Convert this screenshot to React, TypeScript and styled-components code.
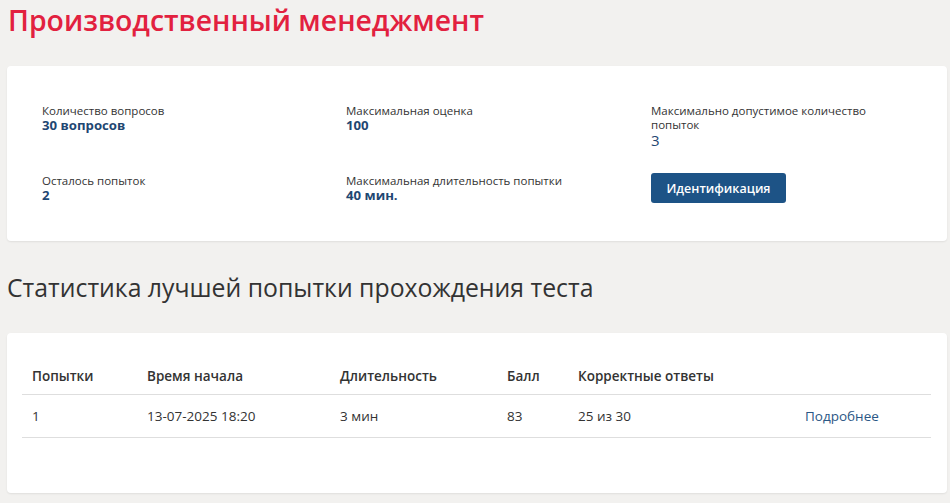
import React from "react";
import styled, { createGlobalStyle } from "styled-components";

const Global = createGlobalStyle`
  html, body { margin: 0; padding: 0; background: #f2f1ef; }
  body { font-family: "Open Sans", "Liberation Sans", sans-serif; color: #333; }
`;

const Page = styled.div`
  padding: 0 3px 12px 7px;
`;

const Title = styled.h1`
  margin: 0 0 28px 0;
  padding: 2px 0 0 1px;
  font-size: 28.4px;
  line-height: 36px;
  font-weight: 600;
  color: #e2213f;
`;

const Card = styled.section<{ $pad: string }>`
  background: #fff;
  border-radius: 4px;
  box-shadow: 0 1px 2px rgba(0, 0, 0, 0.08);
  padding: ${(p) => p.$pad};
`;

const InfoGrid = styled.div`
  display: grid;
  grid-template-columns: 304px 305px 225px;
  row-gap: 26px;
`;

const Item = styled.div`
  display: flex;
  flex-direction: column;
  align-items: flex-start;
`;

const Label = styled.div`
  font-size: 11.5px;
  line-height: 14px;
  color: #333;
`;

const Value = styled.div<{ $plain?: boolean }>`
  font-size: ${(p) => (p.$plain ? "15px" : "13.2px")};
  line-height: ${(p) => (p.$plain ? "16px" : "15px")};
  font-weight: ${(p) => (p.$plain ? 400 : 700)};
  color: #1f4772;
`;

const Button = styled.button`
  width: 135px;
  height: 30px;
  border: none;
  border-radius: 3px;
  background: #1d5386;
  color: #fff;
  font-family: inherit;
  font-size: 12.5px;
  font-weight: 600;
  cursor: pointer;
  margin-top: -1px;
`;

const SectionTitle = styled.h2`
  margin: 30px 0 30px 0;
  font-size: 24.8px;
  line-height: 32px;
  font-weight: 400;
  color: #333;
`;

const Table = styled.table`
  width: 100%;
  border-collapse: collapse;
  table-layout: fixed;
  font-size: 13.5px;
`;

const Th = styled.th<{ $w?: number }>`
  box-sizing: border-box;
  text-align: left;
  font-weight: 600;
  padding: 8px 10px;
  line-height: 20px;
  border-bottom: 1px solid #dedede;
  color: #333;
  width: ${(p) => (p.$w ? `${p.$w}px` : "auto")};
`;

const Td = styled.td`
  padding: 11px 10px;
  line-height: 20px;
  border-bottom: 1px solid #dedede;
  color: #333;
`;

const Link = styled.a`
  color: #2b5785;
  text-decoration: none;
`;

const info = [
  { label: "Количество вопросов", value: "30 вопросов", plain: false },
  { label: "Максимальная оценка", value: "100", plain: false },
  { label: "Максимально допустимое количество попыток", value: "3", plain: true },
  { label: "Осталось попыток", value: "2", plain: false },
  { label: "Максимальная длительность попытки", value: "40 мин.", plain: false },
];

export default function App() {
  return (
    <>
      <Global />
      <Page>
        <Title>Производственный менеджмент</Title>
        <Card $pad="38px 35px 38px 35px">
          <InfoGrid>
            {info.map((it) => (
              <Item key={it.label}>
                <Label>{it.label}</Label>
                <Value $plain={it.plain}>{it.value}</Value>
              </Item>
            ))}
            <Item>
              <Button>Идентификация</Button>
            </Item>
          </InfoGrid>
        </Card>
        <SectionTitle>Статистика лучшей попытки прохождения теста</SectionTitle>
        <Card $pad="25px 16px 55px 15px">
          <Table>
            <thead>
              <tr>
                <Th $w={115}>Попытки</Th>
                <Th $w={193}>Время начала</Th>
                <Th $w={167}>Длительность</Th>
                <Th $w={71}>Балл</Th>
                <Th $w={227}>Корректные ответы</Th>
                <Th></Th>
              </tr>
            </thead>
            <tbody>
              <tr>
                <Td>1</Td>
                <Td>13-07-2025 18:20</Td>
                <Td>3 мин</Td>
                <Td>83</Td>
                <Td>25 из 30</Td>
                <Td>
                  <Link href="#">Подробнее</Link>
                </Td>
              </tr>
            </tbody>
          </Table>
        </Card>
      </Page>
    </>
  );
}
